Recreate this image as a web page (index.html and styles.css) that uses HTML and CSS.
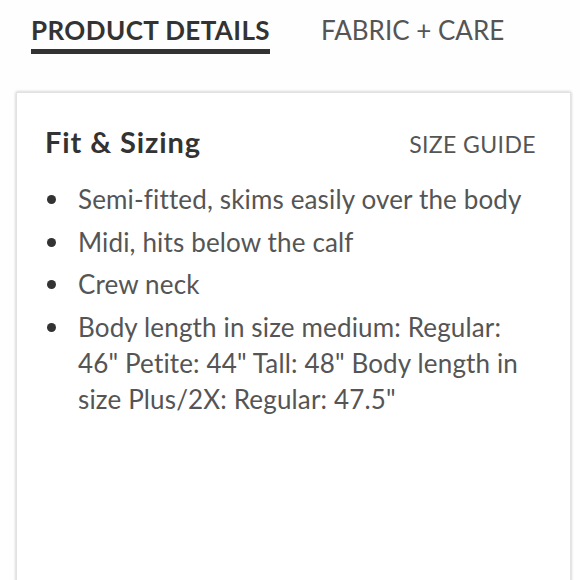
FILE: index.html
```html
<!DOCTYPE html>
<html>
<head>
<meta charset="utf-8">
<link rel="stylesheet" href="styles.css">
</head>
<body>
<div class="tabs">
  <div class="tab active">PRODUCT DETAILS</div>
  <div class="tab">FABRIC + CARE</div>
</div>
<div class="card">
  <div class="card-head">
    <h2 class="title">Fit &amp; Sizing</h2>
    <span class="guide">SIZE GUIDE</span>
  </div>
  <ul class="list">
    <li>Semi-fitted, skims easily over the body</li>
    <li>Midi, hits below the calf</li>
    <li>Crew neck</li>
    <li>Body length in size medium: Regular: 46" Petite: 44" Tall: 48" Body length in size Plus/2X: Regular: 47.5"</li>
  </ul>
</div>
</body>
</html>
```

FILE: styles.css
```css
html, body {
  margin: 0;
  padding: 0;
  background: #fefefe;
  height: 580px;
  overflow: hidden;
}
body {
  font-family: Lato, "Open Sans", sans-serif;
  color: #555;
}
.tabs {
  display: flex;
  gap: 51px;
  padding: 15px 0 0 31px;
}
.tab {
  font-size: 26px;
  line-height: 30px;
  color: #555;
  letter-spacing: 0px;
}
.tab.active {
  font-weight: 700;
  color: #333;
  letter-spacing: 0.4px;
  padding-bottom: 4px;
  border-bottom: 5px solid #333;
}
.card {
  margin: 38px 0 0 16px;
  width: 555px;
  height: 600px;
  box-sizing: border-box;
  border: 1px solid #e2e2e2;
  box-shadow: 0 0 3px rgba(0,0,0,0.25);
  background: #fff;
  padding: 32px 34px 0 28px;
}
.card-head {
  display: flex;
  justify-content: space-between;
  align-items: baseline;
}
.title {
  margin: 0;
  font-size: 29px;
  font-weight: 700;
  color: #333;
  letter-spacing: 0.9px;
  line-height: 34px;
}
.guide {
  font-size: 23px;
  letter-spacing: 0.4px;
  color: #555;
}
.list {
  list-style: none;
  margin: 22px 8px 0 0;
  padding: 0;
}
.list li {
  position: relative;
  padding-left: 33px;
  font-size: 26px;
  line-height: 36px;
  letter-spacing: 0.15px;
  margin-bottom: 6.5px;
  color: #555;
}
.list li::before {
  content: "";
  position: absolute;
  left: 2px;
  top: 14px;
  width: 9px;
  height: 9px;
  border-radius: 50%;
  background: #333;
}
```
